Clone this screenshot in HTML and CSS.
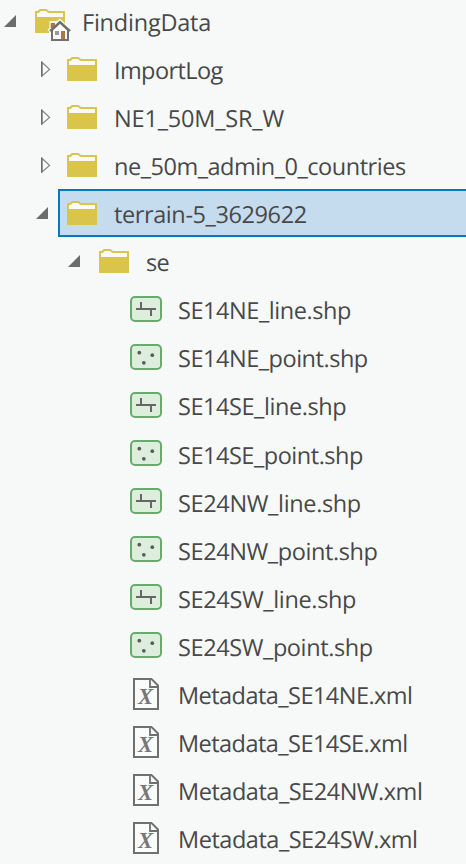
FILE: index.html
```
<!DOCTYPE html>
<html lang="en">
<head>
<meta charset="utf-8">
<title>Catalog</title>
<link rel="stylesheet" href="styles.css">
</head>
<body>
<svg class="defs" aria-hidden="true">
  <symbol id="open" viewBox="0 0 26 48"><path d="M16 18V30H4Z" fill="#6b6b6b"/></symbol>
  <symbol id="closed" viewBox="0 0 26 48"><path d="M10 17.3 17.6 24.5 10 31Z" fill="#fbfcfc" stroke="#858585" stroke-width="1.2"/><path d="M9.7 16.5V31.5" stroke="#6e6e6e" stroke-width="1.4"/></symbol>
  <symbol id="folder" viewBox="0 0 50 48"><path d="M3 14H5.5L8 12H14.5L17 14H33V36H3Z" fill="#d9c54b"/><path d="M5 20V16H6.5L9 14H14L16.5 16H31V20Z" fill="#f9fafa"/></symbol>
  <symbol id="house" viewBox="0 0 50 48"><path d="M17.5 24H25L28 21.5 39.5 32.5V36H17V34.5L15.5 33 17.5 31Z" fill="#f9fafa"/><path d="M18.7 26H23V31H18.7Z" fill="#ae7740"/><path d="M20 33 28 25.5 36 33V43H20Z" fill="#fcfcfc" stroke="#707070" stroke-width="2"/><path d="M17.8 34 28 24.7 38.2 34" fill="none" stroke="#707070" stroke-width="1.8"/><path d="M23 34H27V38H23Z" fill="#999"/><path d="M29 34H33V42H29Z" fill="#ae7740"/></symbol>
  <symbol id="line" viewBox="0 0 50 48"><rect x="3" y="12" width="30" height="24" rx="4" fill="#deeedd" stroke="#68ab6c" stroke-width="2"/><path d="M8 24H28M13 17V24M23 24V31" fill="none" stroke="#666" stroke-width="2"/></symbol>
  <symbol id="point" viewBox="0 0 50 48"><rect x="3" y="12" width="30" height="24" rx="4" fill="#deeedd" stroke="#68ab6c" stroke-width="2"/><g fill="#5d5d5d"><circle cx="11.3" cy="19.7" r="1.9"/><circle cx="24.3" cy="22.2" r="1.9"/><circle cx="15.8" cy="29.8" r="1.9"/></g></symbol>
  <symbol id="xml" viewBox="0 0 50 48"><path d="M6 10H23.5L30 16.5V40H6Z" fill="#fafbfb" stroke="#707070" stroke-width="2"/><path d="M22 10V18H30" fill="none" stroke="#707070" stroke-width="1.8"/><text class="glyph" x="17.5" y="35">X</text></symbol>
</svg>
<ul class="tree">
  <li class="row"><svg class="toggle"><use href="#open"/></svg><div class="item"><svg class="icon"><use href="#folder"/><use href="#house"/></svg><span class="name n1">FindingData</span></div></li>
  <li class="row d1"><svg class="toggle"><use href="#closed"/></svg><div class="item"><svg class="icon"><use href="#folder"/></svg><span class="name n2">ImportLog</span></div></li>
  <li class="row d1"><svg class="toggle"><use href="#closed"/></svg><div class="item"><svg class="icon"><use href="#folder"/></svg><span class="name n3">NE1_50M_SR_W</span></div></li>
  <li class="row d1"><svg class="toggle"><use href="#closed"/></svg><div class="item"><svg class="icon"><use href="#folder"/></svg><span class="name n4">ne_50m_admin_0_countries</span></div></li>
  <li class="row d1"><svg class="toggle"><use href="#open"/></svg><div class="item selected"><svg class="icon"><use href="#folder"/></svg><span class="name n5">terrain-5_3629622</span></div></li>
  <li class="row d2"><svg class="toggle"><use href="#open"/></svg><div class="item"><svg class="icon"><use href="#folder"/></svg><span class="name n6">se</span></div></li>
  <li class="row d3"><span class="toggle"></span><div class="item"><svg class="icon"><use href="#line"/></svg><span class="name n7">SE14NE_line.shp</span></div></li>
  <li class="row d3"><span class="toggle"></span><div class="item"><svg class="icon"><use href="#point"/></svg><span class="name n8">SE14NE_point.shp</span></div></li>
  <li class="row d3"><span class="toggle"></span><div class="item"><svg class="icon"><use href="#line"/></svg><span class="name n7">SE14SE_line.shp</span></div></li>
  <li class="row d3 low"><span class="toggle"></span><div class="item"><svg class="icon"><use href="#point"/></svg><span class="name n8">SE14SE_point.shp</span></div></li>
  <li class="row d3 low"><span class="toggle"></span><div class="item"><svg class="icon"><use href="#line"/></svg><span class="name n9">SE24NW_line.shp</span></div></li>
  <li class="row d3 low"><span class="toggle"></span><div class="item"><svg class="icon"><use href="#point"/></svg><span class="name n5">SE24NW_point.shp</span></div></li>
  <li class="row d3 low"><span class="toggle"></span><div class="item"><svg class="icon"><use href="#line"/></svg><span class="name n9">SE24SW_line.shp</span></div></li>
  <li class="row d3 low"><span class="toggle"></span><div class="item"><svg class="icon"><use href="#point"/></svg><span class="name n5">SE24SW_point.shp</span></div></li>
  <li class="row d3 low"><span class="toggle"></span><div class="item"><svg class="icon"><use href="#xml"/></svg><span class="name n10">Metadata_SE14NE.xml</span></div></li>
  <li class="row d3 low"><span class="toggle"></span><div class="item"><svg class="icon"><use href="#xml"/></svg><span class="name n10">Metadata_SE14SE.xml</span></div></li>
  <li class="row d3 low"><span class="toggle"></span><div class="item"><svg class="icon"><use href="#xml"/></svg><span class="name n4">Metadata_SE24NW.xml</span></div></li>
  <li class="row d3 low"><span class="toggle"></span><div class="item"><svg class="icon"><use href="#xml"/></svg><span class="name n4">Metadata_SE24SW.xml</span></div></li>
</ul>
</body>
</html>
```
FILE: styles.css
```
* { box-sizing: border-box; }
html { overflow: hidden; background: #f7f9f8; }
body { margin: 0; height: 864px; overflow: hidden; }
.defs { display: none; }
.tree { list-style: none; margin: -3px 0 0; padding: 0; }
.row { display: flex; height: 48px; }
.d1 { padding-left: 32px; }
.d2 { padding-left: 64px; }
.d3 { padding-left: 96px; }
.toggle { flex: none; width: 26px; height: 48px; }
.item { flex: 1; display: flex; padding-left: 6px; }
.selected { margin-right: -2px; background: #c5dbee; box-shadow: inset 0 0 0 2px #007ac2; }
.icon { flex: none; width: 50px; height: 48px; }
.name {
  padding-top: 2px;
  color: #484848;
  font: 23.5px/46px "Open Sans", "Noto Sans", sans-serif;
  white-space: nowrap;
  text-rendering: geometricPrecision;
}
.low .name { padding-top: 3px; }
.glyph { font: italic bold 22.5px "Liberation Serif", serif; text-anchor: middle; fill: #777; }
.n1 { letter-spacing: -.22px; }
.n2 { letter-spacing: -.6px; }
.n3 { letter-spacing: -.18px; }
.n4 { letter-spacing: -.47px; }
.n5 { letter-spacing: -.4px; }
.n6 { letter-spacing: -.6px; }
.n7 { letter-spacing: -.44px; }
.n8 { letter-spacing: -.47px; }
.n9 { letter-spacing: -.35px; }
.n10 { letter-spacing: -.54px; }
```
